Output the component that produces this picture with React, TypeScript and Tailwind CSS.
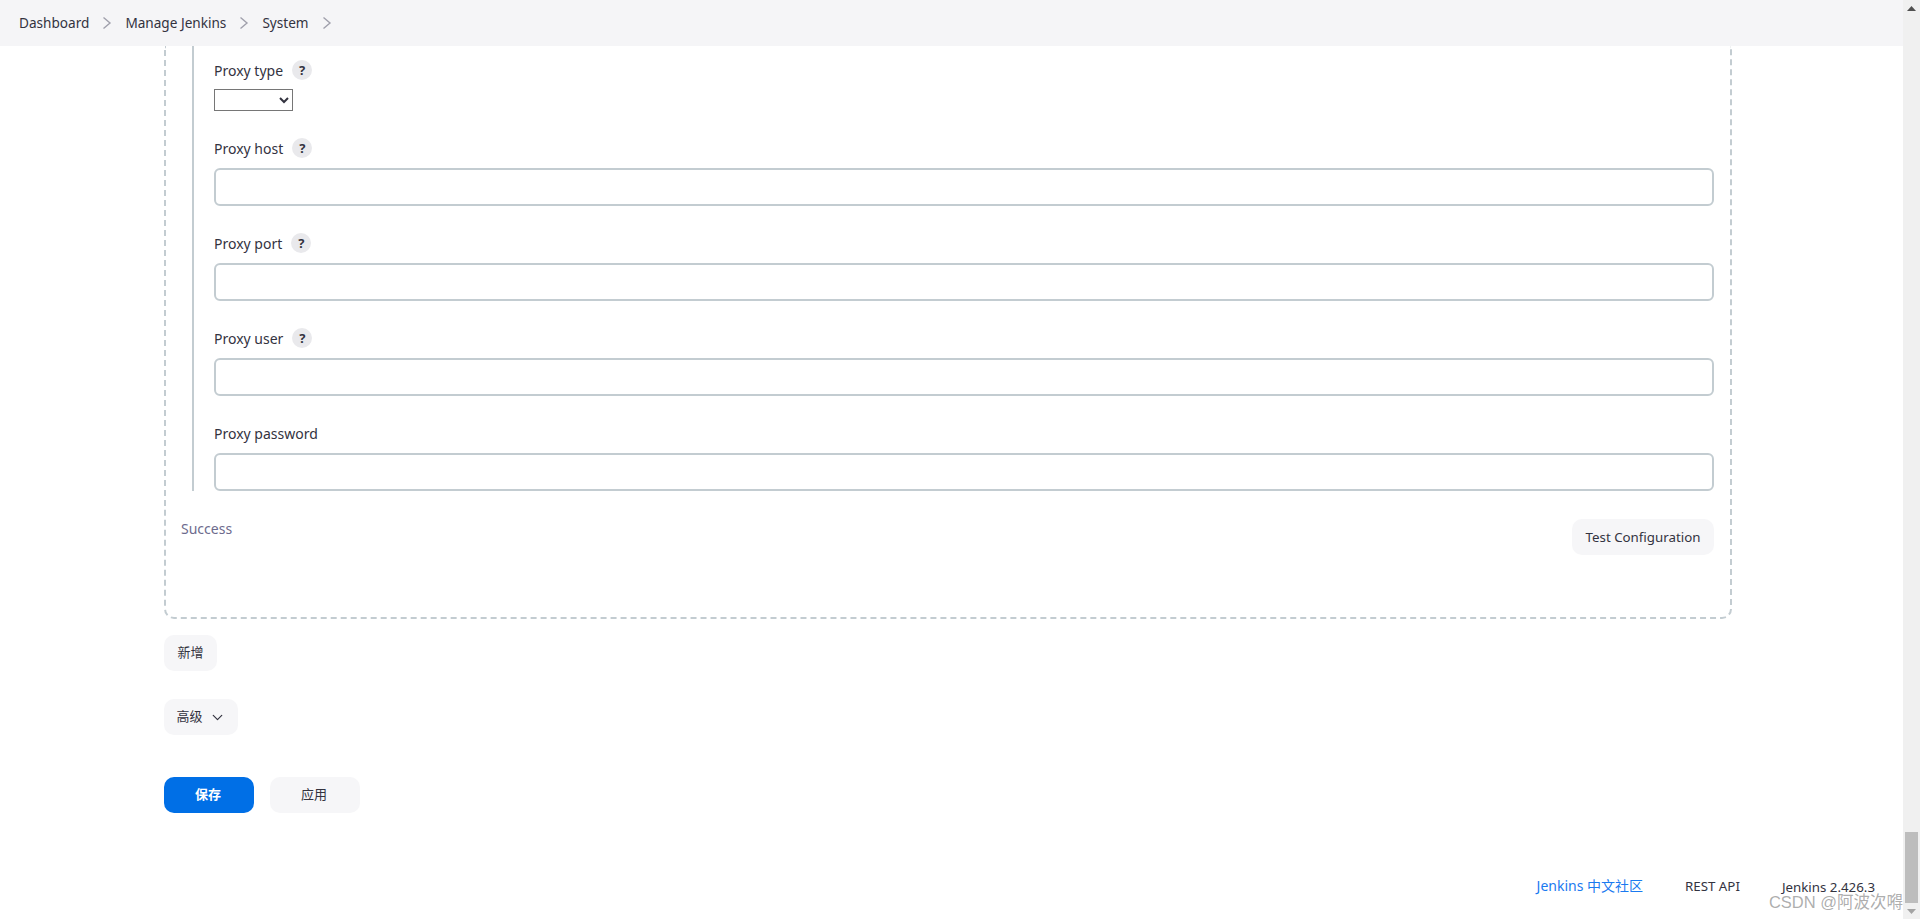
import { ChevronDown } from 'lucide-react';

const fields = [
  { label: 'Proxy host', help: true },
  { label: 'Proxy port', help: true },
  { label: 'Proxy user', help: true },
  { label: 'Proxy password', help: false },
];

const HelpBadge = () => (
  <span className="w-5 h-5 rounded-full bg-[#e9e9ec] flex items-center justify-center text-[13px] font-bold text-[#33333f]">?</span>
);

const FieldLabel = ({ label, help }: { label: string; help: boolean }) => (
  <div className="h-5 flex items-center gap-[9px] text-sm leading-5">
    <span className="pt-[2px]">{label}</span>
    {help && <HelpBadge />}
  </div>
);

const Crumb = ({ label }: { label: string }) => (
  <>
    <span>{label}</span>
    <svg width="16" height="16" viewBox="0 0 16 16" className="mx-[10px] fill-none stroke-[#a0a0ac]" strokeWidth="1.4">
      <path d="M4.5 2.5 L11 8 L4.5 13.5" />
    </svg>
  </>
);

export default function App() {
  return (
    <div className="relative h-[919px] flex overflow-hidden bg-white text-[#33333f] font-['Noto_Sans','Noto_Sans_CJK_SC',sans-serif]">
      <div className="flex-1 flex flex-col min-w-0">
        {/* Breadcrumb bar */}
        <header className="h-[46px] shrink-0 bg-[#f5f5f7] flex items-center pl-[19px] text-[13.6px]">
          <Crumb label="Dashboard" />
          <Crumb label="Manage Jenkins" />
          <Crumb label="System" />
        </header>

        <main className="pl-[164px] flex-1 flex flex-col">
          {/* Proxy card, its top edge is scrolled away */}
          <div className="w-[1568px] border-2 border-t-0 border-dashed border-[#c3ccd1] rounded-b-[10px] pl-[15px] pr-4 pb-[62px]">
            <div className="ml-[11px] pl-5 pt-[14px] border-l-2 border-[#c3ccd1]">
              <FieldLabel label="Proxy type" help />
              <select className="block mt-[9px] w-[79px] h-[22px] border border-[#767676] bg-white text-sm" />
              {fields.map((f) => (
                <div key={f.label} className="mt-[27px]">
                  <FieldLabel label={f.label} help={f.help} />
                  <input className="block mt-[10px] w-full h-[38px] border-2 border-[#c3ccd1] rounded-md bg-white" />
                </div>
              ))}
            </div>
            <div className="mt-[28px] flex justify-between items-start">
              <span className="text-sm leading-5 text-[#6d6b8d]">Success</span>
              <button className="h-9 w-[142px] pt-[2px] rounded-[10px] bg-[#f6f6f8] text-[13.3px]">Test Configuration</button>
            </div>
          </div>

          <button className="mt-[16px] h-9 w-[53px] rounded-[10px] bg-[#f6f6f8] text-[13px]">新增</button>
          <button className="mt-[28px] h-9 w-[74px] rounded-[10px] bg-[#f6f6f8] text-[13px] flex items-center justify-center gap-[6px]">
            高级
            <ChevronDown className="w-[17px] h-[17px]" strokeWidth={1.7} />
          </button>

          <div className="mt-[42px] flex gap-4">
            <button className="h-9 w-[90px] pr-[2px] rounded-[10px] bg-[#006fe6] text-white text-[13px] font-bold">保存</button>
            <button className="h-9 w-[90px] pr-[2px] rounded-[10px] bg-[#f6f6f8] text-[13px]">应用</button>
          </div>

          {/* Footer links */}
          <footer className="mt-[63px] pr-7 flex justify-end gap-[42px] text-[13.3px] leading-5">
            <a className="text-sm text-[#1a7af0]">Jenkins 中文社区</a>
            <span>REST API</span>
            <span className="translate-y-px">Jenkins 2.426.3</span>
          </footer>
        </main>
      </div>

      {/* Browser scrollbar */}
      <aside className="w-[17px] shrink-0 bg-[#f0f0f0] flex flex-col">
        <div className="h-[17px] flex items-center justify-center">
          <svg width="9" height="5" viewBox="0 0 9 5" className="fill-[#505050]">
            <path d="M4.5 0 L9 5 L0 5 Z" />
          </svg>
        </div>
        <div className="flex-1" />
        <div className="h-[71px] mx-[2px] bg-[#bdbdbd]" />
        <div className="h-4 flex items-center justify-center">
          <svg width="9" height="5" viewBox="0 0 9 5" className="fill-[#a3a3a3]">
            <path d="M0 0 L9 0 L4.5 5 Z" />
          </svg>
        </div>
      </aside>

      {/* Image watermark */}
      <div className="absolute right-[17px] bottom-[7px] text-[16.5px] leading-5 text-[#8a8a8a]/70 font-['Liberation_Sans','Noto_Sans_CJK_SC',sans-serif]">CSDN @阿波次嘚</div>
    </div>
  );
}
